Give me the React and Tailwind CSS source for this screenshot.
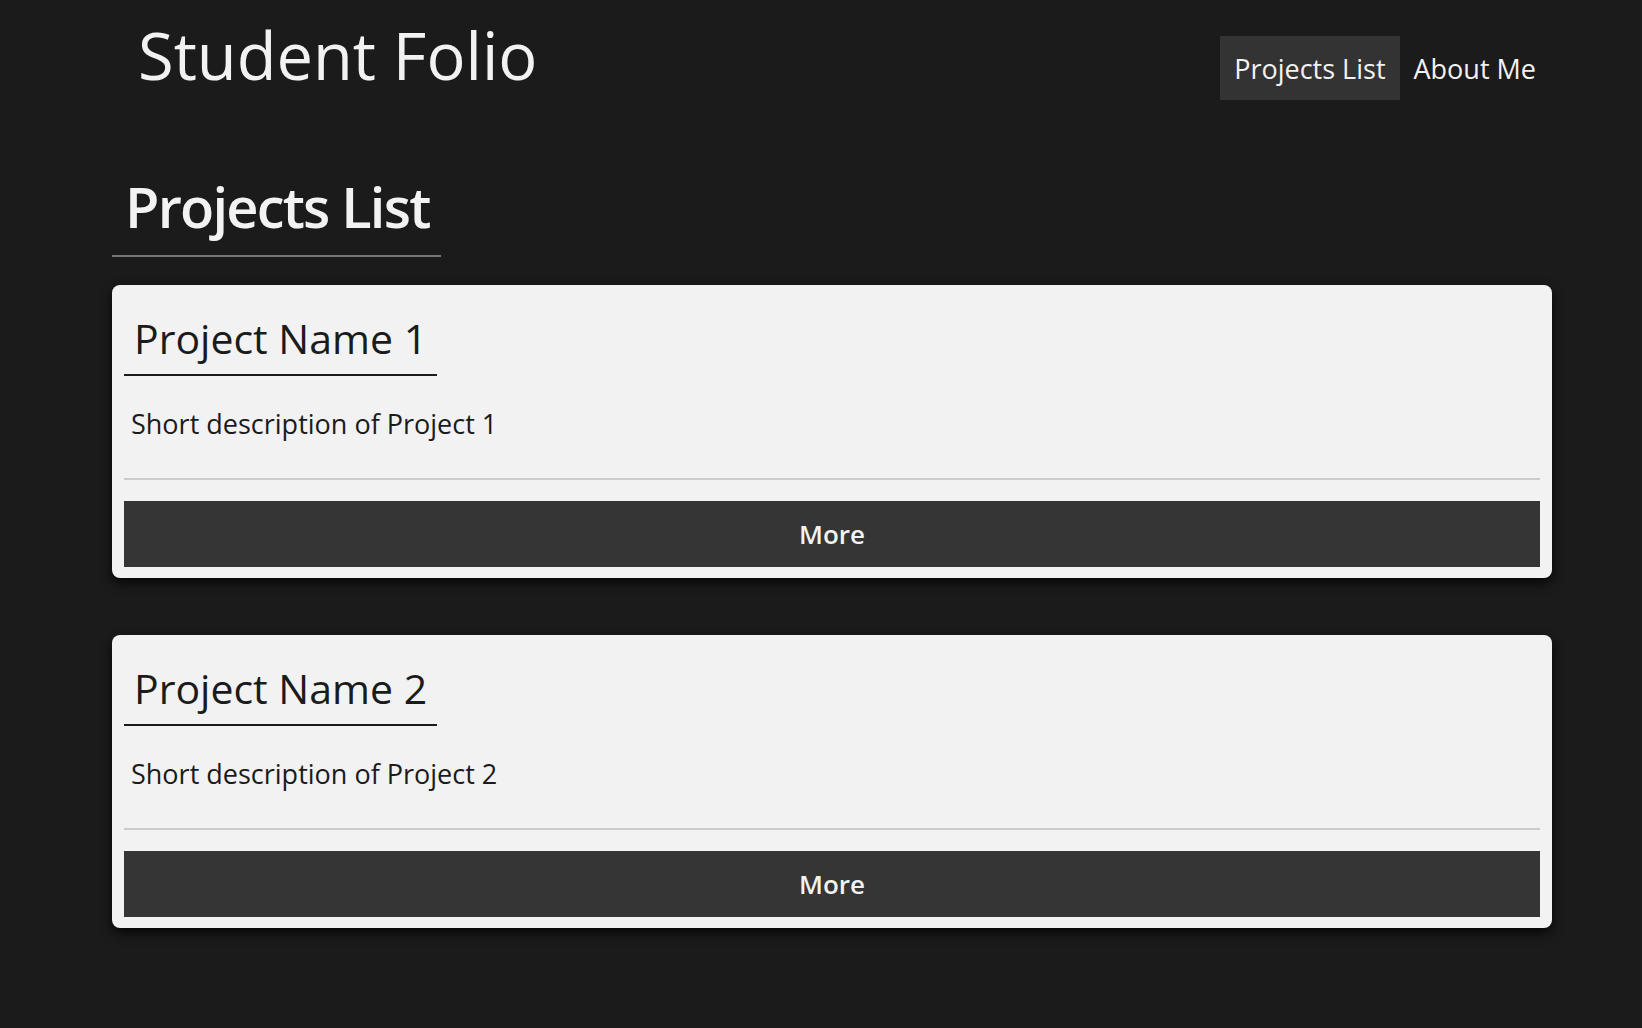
import React from "react";

const font = { fontFamily: '"Open Sans", "Noto Sans", sans-serif' };

function Card({ n }) {
  return (
    <div className="rounded-[8px] bg-[#f2f2f2] px-[12px] pt-[12px] pb-[11px] shadow-[0_5px_12px_rgba(0,0,0,0.8)]">
      <h2 className="inline-block border-b-2 border-[#1b1b1b] pl-[10px] pr-[10px] pt-[13px] pb-[8px] text-[41px] leading-[56px] font-normal text-[#1b1b1b]">
        Project Name {n}
      </h2>
      <p className="px-[7px] pt-[29px] pb-[35px] text-[27px] leading-[38px] text-[#1b1b1b]">
        Short description of Project {n}
      </p>
      <div className="h-[2px] bg-[#cccccc]" />
      <button className="mt-[21px] flex h-[66px] w-full items-center justify-center bg-[#353535] text-[26px] font-semibold text-[#f2f2f2]">
        More
      </button>
    </div>
  );
}

export default function App() {
  return (
    <div className="min-h-[1028px] bg-[#1b1b1b]" style={font}>
      <div className="ml-[112px] w-[1440px]">
        <header className="flex items-start justify-between">
          <h1 className="pl-[26px] pt-[23px] text-[65px] leading-[64px] font-normal text-[#f2f2f2]">
            Student Folio
          </h1>
          <nav className="mt-[36px] mr-[2px] flex">
            <a className="flex h-[64px] items-center bg-[#333333] px-[14px] pt-[3px] text-[27px] text-[#f2f2f2]">
              Projects List
            </a>
            <a className="flex h-[64px] items-center px-[14px] pt-[3px] text-[27px] text-[#f2f2f2]">
              About Me
            </a>
          </nav>
        </header>
        <div className="mt-[71px]">
          <h2 className="inline-block border-b-2 border-[#777777] pl-[13px] pr-[12px] pb-[14px] text-[56px] leading-[70px] font-semibold tracking-[-1.8px] text-[#f2f2f2]">
            Projects List
          </h2>
        </div>
        <div className="mt-[28px] flex flex-col gap-[57px]">
          <Card n={1} />
          <Card n={2} />
        </div>
      </div>
    </div>
  );
}
